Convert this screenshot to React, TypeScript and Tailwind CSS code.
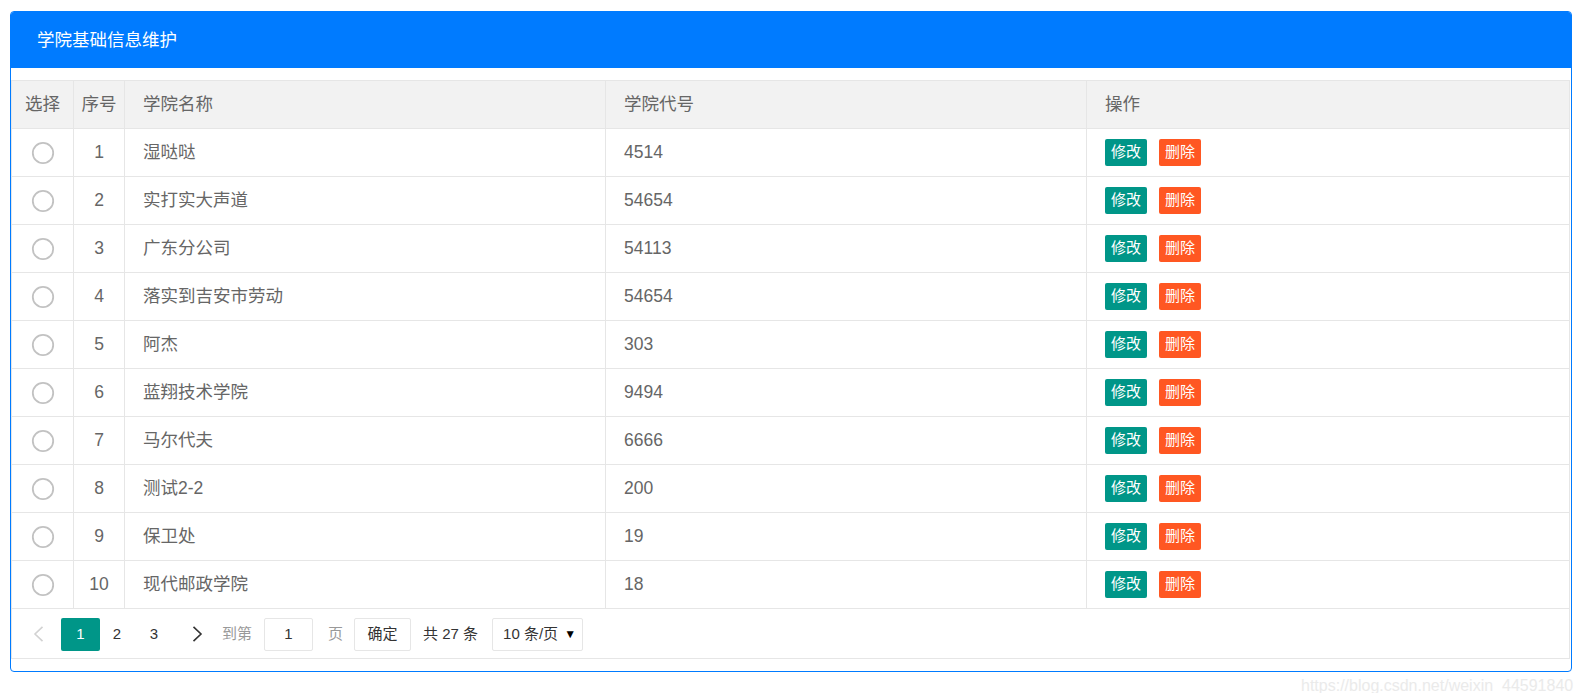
import React from "react";

const rows: [number, string, string][] = [
  [1, "湿哒哒", "4514"],
  [2, "实打实大声道", "54654"],
  [3, "广东分公司", "54113"],
  [4, "落实到吉安市劳动", "54654"],
  [5, "阿杰", "303"],
  [6, "蓝翔技术学院", "9494"],
  [7, "马尔代夫", "6666"],
  [8, "测试2-2", "200"],
  [9, "保卫处", "19"],
  [10, "现代邮政学院", "18"],
];

const font = { fontFamily: '"Liberation Sans", "Noto Sans CJK SC", sans-serif' };

function Radio() {
  return (
    <svg width="24" height="24" viewBox="0 0 24 24">
      <circle cx="12" cy="12" r="10.2" fill="none" stroke="#c2c2c2" strokeWidth="1.8" />
    </svg>
  );
}

function Chevron({ dir, color }: { dir: "l" | "r"; color: string }) {
  return (
    <svg width="11" height="16" viewBox="0 0 11 16">
      {dir === "l" ? (
        <polyline points="9.5,0.8 2,8 9.5,15.2" fill="none" stroke={color} strokeWidth="1.6" />
      ) : (
        <polyline points="1.5,0.8 9,8 1.5,15.2" fill="none" stroke={color} strokeWidth="1.6" />
      )}
    </svg>
  );
}

export default function App() {
  return (
    <div className="relative w-[1582px] h-[693px] bg-white" style={font}>
      <div className="ml-[10px] mt-[11px] w-[1562px] h-[661px] border border-[#007bff] rounded-[4px] overflow-hidden">
        <div className="h-[56px] bg-[#007bff] flex items-center pl-[26px] text-white text-[17.5px]">
          学院基础信息维护
        </div>
        <div className="pt-[12px] pr-px">
          <div className="border-t border-l border-r border-[#e6e6e6] text-[#666] text-[17.5px]">
            <div className="flex h-[48px] border-b border-[#e6e6e6] bg-[#f2f2f2]">
              <div className="w-[61px] flex items-center justify-center">选择</div>
              <div className="w-[51px] border-l border-[#e6e6e6] flex items-center justify-center">序号</div>
              <div className="w-[481px] border-l border-[#e6e6e6] flex items-center pl-[18px]">学院名称</div>
              <div className="w-[481px] border-l border-[#e6e6e6] flex items-center pl-[18px]">学院代号</div>
              <div className="flex-1 border-l border-[#e6e6e6] flex items-center pl-[18px]">操作</div>
            </div>
            {rows.map(([n, name, code]) => (
              <div key={n} className="flex h-[48px] border-b border-[#e6e6e6]">
                <div className="w-[61px] flex items-center justify-center">
                  <Radio />
                </div>
                <div className="w-[51px] border-l border-[#e6e6e6] flex items-center justify-center">{n}</div>
                <div className="w-[481px] border-l border-[#e6e6e6] flex items-center pl-[18px]">{name}</div>
                <div className="w-[481px] border-l border-[#e6e6e6] flex items-center pl-[18px]">{code}</div>
                <div className="flex-1 border-l border-[#e6e6e6] flex items-center pl-[18px] gap-[12px]">
                  <span className="w-[42px] h-[27px] rounded-[2px] bg-[#009688] text-white text-[15px] flex items-center justify-center">
                    修改
                  </span>
                  <span className="w-[42px] h-[27px] rounded-[2px] bg-[#ff5722] text-white text-[15px] flex items-center justify-center">
                    删除
                  </span>
                </div>
              </div>
            ))}
            <div className="flex items-center h-[50px] border-b border-[#e6e6e6] pl-[8px] text-[15px] pt-[1px]">
              <div className="w-[37px] h-[33px] flex items-center justify-center">
                <Chevron dir="l" color="#d2d2d2" />
              </div>
              <div className="ml-[4px] w-[39px] h-[33px] rounded-[2px] bg-[#009688] text-white flex items-center justify-center">
                1
              </div>
              <div className="w-[34px] h-[33px] flex items-center justify-center text-[#333]">2</div>
              <div className="w-[40px] h-[33px] flex items-center justify-center text-[#333]">3</div>
              <div className="w-[46px] h-[33px] flex items-center justify-center">
                <Chevron dir="r" color="#333" />
              </div>
              <span className="ml-[2px] text-[#999]">到第</span>
              <div className="ml-[12px] w-[49px] h-[33px] border border-[#e6e6e6] rounded-[2px] flex items-center justify-center text-[#333]">
                1
              </div>
              <span className="ml-[15px] text-[#999]">页</span>
              <div className="ml-[11px] w-[57px] h-[33px] border border-[#e6e6e6] rounded-[2px] flex items-center justify-center text-[#333]">
                确定
              </div>
              <span className="ml-[12px] text-[#333]">共 27 条</span>
              <div className="ml-[14px] w-[91px] h-[33px] border border-[#e6e6e6] rounded-[2px] flex items-center pl-[10px] pr-[6px] justify-between text-[#333]">
                <span>10 条/页</span>
                <span className="text-[12px] text-black">▼</span>
              </div>
            </div>
          </div>
        </div>
      </div>
      <div
        className="absolute left-[1301px] top-[664px] text-[16px] text-[#e6e6e6] leading-[22px] whitespace-nowrap"
        style={{ fontFamily: '"Liberation Sans", sans-serif', opacity: 0.8 }}
      >
        https://blog.csdn.net/weixin_44591840
      </div>
    </div>
  );
}
